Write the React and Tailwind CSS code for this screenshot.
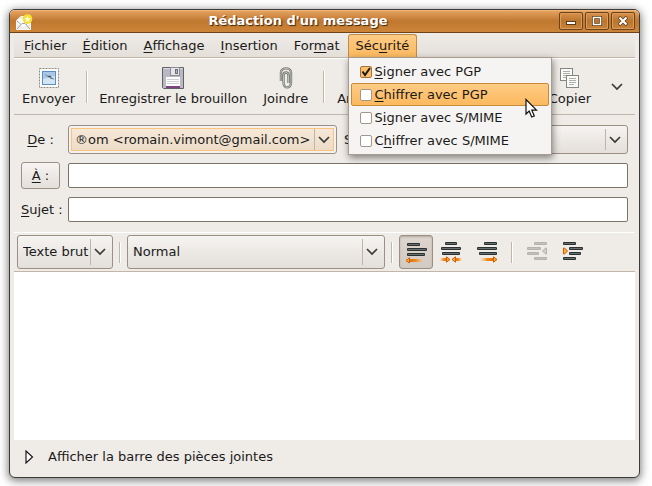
import React from "react";

const U = ({ children }) => (
  <span className="underline decoration-1 underline-offset-2">{children}</span>
);

function Chevron({ className = "" }) {
  return (
    <svg width="12" height="8" viewBox="0 0 12 8" className={className} fill="none" stroke="#3a3a36" strokeWidth="1.7">
      <path d="M1 1 L6 6 L11 1" />
    </svg>
  );
}

function VSep({ className = "" }) {
  return <div className={`w-[2px] shrink-0 border-l border-[#c2b6aa] bg-white ${className}`} />;
}

function Combo({ label, id, value, className = "", focused = false, plain = false }) {
  return (
    <div
      className={`relative flex rounded-[3px] border border-[#9b9084] ${
        focused ? "bg-[#f5f2ee] p-[2px]" : "bg-linear-to-b from-[#f6f4f2] via-[#ece9e5] to-[#e4dfd9] p-[3px]"
      } ${className}`}
    >
      <div
        className={`flex min-w-0 flex-1 ${
          focused ? "border border-[#fac47e] bg-linear-to-b from-[#f6e8d8] to-[#ecdcc8]" : ""
        }`}
      >
        <select
          id={id}
          aria-label={label}
          className={`min-w-0 flex-1 appearance-none bg-transparent outline-none ${plain ? "pl-[2px]" : "pl-[3px]"}`}
          defaultValue={value}
        >
          <option value={value}>{value}</option>
        </select>
        <div className="pointer-events-none flex w-[19px] shrink-0 items-center justify-center border-l border-[#c0b4a8]">
          <Chevron />
        </div>
      </div>
    </div>
  );
}

function ToolButton({ icon, label }) {
  return (
    <button type="button" className="flex shrink-0 flex-col items-center px-2">
      <span className="flex h-[24px] items-center justify-center">{icon}</span>
      <span className="leading-[18px]">{label}</span>
    </button>
  );
}

function StampIcon() {
  return (
    <svg width="20" height="20" viewBox="0 0 20 20">
      <rect x="0.5" y="0.5" width="19" height="19" fill="#fbfbfa" stroke="#8b8c88" strokeDasharray="2 1" />
      <rect x="3.5" y="3.5" width="13" height="13" fill="#a9c8e6" stroke="#5b8fc4" />
      <path d="M4 11 L16 8 V16 H4Z" fill="#d3e4f2" />
      <path d="M5 6 L9 8 L11 7.5 L13 9.5 L10 9.6 Z" fill="#45525e" />
      <path d="M11 10 L15 11" stroke="#5f7488" />
    </svg>
  );
}

function DiskIcon() {
  return (
    <svg width="22" height="22" viewBox="0 0 22 22">
      <path d="M0.5 0.5 H21.5 V21.5 H1.5 L0.5 20.5Z" fill="#b9b9c4" stroke="#60606b" />
      <path d="M1.5 1.5 H20.5" stroke="#dcdce4" />
      <rect x="8.5" y="0.5" width="9" height="8" fill="#e6e6ea" stroke="#8b8b96" />
      <rect x="13.5" y="2.5" width="2" height="4" fill="#b4b4bf" stroke="#6e6e78" />
      <rect x="4" y="10" width="14" height="9" fill="#fdfdfe" />
      <path d="M5 12.5 H17 M5 14.5 H17 M5 16.5 H17" stroke="#cfcfd8" />
      <rect x="4" y="19" width="14" height="2" fill="#7b4480" />
    </svg>
  );
}

function ClipIcon() {
  return (
    <svg width="14" height="22" viewBox="0 0 14 22" fill="none">
      <path d="M2 14 V5.5 C2 0 12 0 12 5.5 V15.5 C12 22 4.5 22 4.5 15.5 V8.5 C4.5 4.5 9.5 4.5 9.5 8.5 V16" stroke="#757972" strokeWidth="2.4" />
      <path d="M2 14 V5.5 C2 0 12 0 12 5.5 V15.5 C12 22 4.5 22 4.5 15.5 V8.5 C4.5 4.5 9.5 4.5 9.5 8.5 V16" stroke="#c6cac2" strokeWidth="0.9" />
    </svg>
  );
}

function CopyIcon() {
  return (
    <svg width="20" height="20" viewBox="0 0 20 20">
      <rect x="0.5" y="0.5" width="12" height="12" fill="#fafaf9" stroke="#858782" />
      <path d="M3 3.5 H10 M3 5.5 H10 M3 7.5 H10 M3 9.5 H8" stroke="#aeb0ab" />
      <rect x="6.5" y="7.5" width="12" height="12" fill="#fafaf9" stroke="#858782" />
      <path d="M9 10.5 H16 M9 12.5 H16 M9 14.5 H16 M9 16.5 H14" stroke="#aeb0ab" />
    </svg>
  );
}

function MailIcon() {
  return (
    <svg width="17" height="17" viewBox="0 0 17 17">
      <path d="M0.5 6.5 L5 2.5 H11 L14.5 6.5 V15.5 H0.5Z" fill="#eeeeec" stroke="#f7f7f5" />
      <path d="M2 5 H13 V10 L7.5 13 L2 10Z" fill="#fff" />
      <path d="M1 15 L6 9.5 H9 L14 15 M1 7 L5 10.5 M14 7 L10 10.5" stroke="#a5a6a0" fill="none" />
      <circle cx="11.5" cy="5" r="4.8" fill="#f8e52e" />
      <path d="M11.5 1 L12.8 3.8 L15.7 4.1 L13.5 6.1 L14.2 9 L11.5 7.5 L8.8 9 L9.5 6.1 L7.3 4.1 L10.2 3.8Z" fill="#fffbd0" stroke="#e8c500" strokeWidth="0.5" />
    </svg>
  );
}

/* Each bar is [x, y, width] with a fixed height of 3. */
function Bars({ bars, dim }) {
  return bars.map(([x, y, w]) => (
    <g key={`${x}-${y}`}>
      <rect x={x} y={y} width={w} height="3" rx="1" fill={dim ? "#b6b3ae" : "#2a3032"} />
      <rect x={x + 1} y={y + 1} width={w - 2} height="1" fill={dim ? "#c4c1bc" : "#66706f"} />
    </g>
  ));
}

const ArrowL = ({ x, y, tail }) => (
  <g>
    <rect x={x + 3} y={y - 1} width={tail} height="3" fill="url(#fadeRight)" />
    <path d={`M${x} ${y + 0.5} l3.5 -2.7 v5.4z`} fill="#fcae3a" stroke="#ce5c00" />
  </g>
);
const ArrowR = ({ x, y, tail }) => (
  <g>
    <rect x={x - 3 - tail} y={y - 1} width={tail} height="3" fill="url(#fadeLeft)" />
    <path d={`M${x} ${y + 0.5} l-3.5 -2.7 v5.4z`} fill="#fcae3a" stroke="#ce5c00" />
  </g>
);

function AlignLeftIcon() {
  return (
    <svg width="22" height="22" viewBox="0 0 22 22">
      <defs>
        <linearGradient id="fadeRight">
          <stop offset="0" stopColor="#e07010" />
          <stop offset="0.5" stopColor="#f08a1c" />
          <stop offset="1" stopColor="#f9b868" stopOpacity="0.1" />
        </linearGradient>
        <linearGradient id="fadeLeft">
          <stop offset="0" stopColor="#f9b868" stopOpacity="0.1" />
          <stop offset="0.5" stopColor="#f08a1c" />
          <stop offset="1" stopColor="#e07010" />
        </linearGradient>
      </defs>
      <Bars bars={[[2, 2, 13], [2, 7, 20], [2, 12, 18]]} />
      <ArrowL x={1} y={19} tail={14} />
    </svg>
  );
}

function AlignCenterIcon() {
  return (
    <svg width="22" height="22" viewBox="0 0 22 22">
      <Bars bars={[[5, 1, 12], [1, 6, 20], [2, 11, 18]]} />
      <ArrowR x={10} y={18} tail={7} />
      <ArrowL x={12} y={18} tail={7} />
    </svg>
  );
}

function AlignRightIcon() {
  return (
    <svg width="22" height="22" viewBox="0 0 22 22">
      <Bars bars={[[8, 1, 13], [1, 6, 20], [3, 11, 18]]} />
      <ArrowR x={21} y={18} tail={14} />
    </svg>
  );
}

function OutdentIcon() {
  return (
    <svg width="22" height="22" viewBox="0 0 22 22">
      <Bars dim bars={[[8, 1, 13], [1, 6, 14], [1, 11, 12], [8, 16, 13]]} />
      <path d="M20.5 7 v6 h-1 l-3 -3 l3 -3z" fill="#d0cdc8" stroke="#b6b3ae" />
    </svg>
  );
}

function IndentIcon() {
  return (
    <svg width="22" height="22" viewBox="0 0 22 22">
      <Bars bars={[[1, 1, 13], [7, 6, 14], [7, 11, 12], [1, 16, 13]]} />
      <path d="M1.5 7 v6 h1 l3 -3 l-3 -3z" fill="#fcae3a" stroke="#ce5c00" />
    </svg>
  );
}

function FormatButton({ label, icon, active, disabled }) {
  return (
    <button
      type="button"
      aria-label={label}
      aria-pressed={active}
      disabled={disabled}
      className={`flex h-[34px] items-center justify-center rounded-[3px] border ${
        active
          ? "w-[34px] border-[#9b8f84] bg-linear-to-b from-[#ddd5ce] to-[#d3cac2] shadow-[inset_0_1px_2px_#b5aaa0]"
          : "w-[36px] border-transparent"
      }`}
    >
      {icon}
    </button>
  );
}

function SecurityItem({ children, checked = false, highlighted = false }) {
  return (
    <label
      className={`relative flex h-[23px] items-center rounded-[2px] border pl-[8px] ${
        highlighted ? "border-[#c68a3a] bg-linear-to-b from-[#ffcb84] to-[#fbb95e]" : "border-transparent"
      }`}
    >
      <span className="relative mr-[3px] size-[12px]">
        <input
          type="checkbox"
          defaultChecked={checked}
          className="block size-[12px] appearance-none rounded-[2px] border border-[#a3968a] bg-white checked:border-[#a8733a] checked:bg-[#fdbf6c]"
        />
        {checked && (
          <svg width="12" height="12" viewBox="0 0 12 12" className="pointer-events-none absolute inset-0">
            <path d="M2.5 5.5 L5 9 L10 2" fill="none" stroke="#1a1a1a" strokeWidth="2" />
          </svg>
        )}
      </span>
      <span>{children}</span>
      {highlighted && (
        <svg width="13" height="21" viewBox="0 0 13 21" className="pointer-events-none absolute top-[14px] right-[10px] z-20">
          <path d="M1 1.5 V16 L4.2 13 L6.7 19 L9.3 18 L6.8 12.2 H11.5 Z" fill="#fff" stroke="#111" strokeWidth="1.2" />
        </svg>
      )}
    </label>
  );
}

function WindowButton({ label, children }) {
  return (
    <button
      type="button"
      aria-label={label}
      className="flex h-[18px] w-[24px] items-center justify-center rounded-[2px] border border-[#6b431a] bg-linear-to-b from-[#d9924b] via-[#b9752f] to-[#c98439] shadow-[inset_0_0_0_1px_#dc9c5c]"
    >
      <svg width="10" height="10" viewBox="0 0 10 10">{children}</svg>
    </button>
  );
}

function MenuItem({ children }) {
  return <button type="button" className="h-[23px] px-2">{children}</button>;
}

export default function App() {
  return (
    <div className="flex min-h-screen bg-white pt-[9px] pr-[12px] pb-[8px] pl-[9px] font-['DejaVu_Sans',sans-serif] text-[13px] leading-[16px] text-[#1a1a1a]">
      <div className="flex min-w-0 flex-1 flex-col rounded-[6px] border border-[#3c3b37] bg-[#efebe7] shadow-[0_2px_9px_1px_rgba(0,0,0,0.5)]">
        <header className="flex h-[23px] shrink-0 items-center rounded-t-[5px] border-b border-[#6e4318] bg-linear-to-b from-[#e8a663] via-[#c07830] to-[#cc8538] pr-[4px] pl-[6px] shadow-[inset_0_1px_0_#f0b67c]">
          <div className="pt-[2px]">
            <MailIcon />
          </div>
          <h1 className="flex-1 pl-1 text-center font-bold text-white [text-shadow:1px_1px_1px_#3d2408]">
            Rédaction d'un message
          </h1>
          <div className="flex gap-[2px]">
            <WindowButton label="Réduire">
              <rect x="0.5" y="5.5" width="9" height="3" fill="#fff" stroke="#5c3a17" />
            </WindowButton>
            <WindowButton label="Agrandir">
              <rect x="1.5" y="1.5" width="7" height="7" fill="none" stroke="#5c3a17" strokeWidth="3" />
              <rect x="1.5" y="1.5" width="7" height="7" fill="none" stroke="#fff" strokeWidth="1.5" />
            </WindowButton>
            <WindowButton label="Fermer">
              <path d="M1 1 L9 9 M9 1 L1 9" stroke="#5c3a17" strokeWidth="3.6" />
              <path d="M1.5 1.5 L8.5 8.5 M8.5 1.5 L1.5 8.5" stroke="#fff" strokeWidth="2.2" />
            </WindowButton>
          </div>
        </header>

        <div className="flex flex-1 flex-col px-[4px]">
          <nav className="flex h-[25px] shrink-0 items-end border-b border-[#c2b6aa] bg-linear-to-b from-[#efebe7] to-[#e4dfd9] pl-[2px]">
            <MenuItem><U>F</U>ichier</MenuItem>
            <MenuItem><U>É</U>dition</MenuItem>
            <MenuItem><U>A</U>ffichage</MenuItem>
            <MenuItem><U>I</U>nsertion</MenuItem>
            <MenuItem>For<U>m</U>at</MenuItem>
            <div className="relative">
              <button
                type="button"
                aria-expanded="true"
                className="block h-[23px] rounded-t-[3px] border border-b-0 border-[#c08a48] bg-linear-to-b from-[#ffcb84] to-[#fbb95e] px-[7px]"
              >
                Séc<U>u</U>rité
              </button>
              <div className="absolute top-[23px] left-0 z-10 w-[204px] border border-[#a89c90] bg-[#f6f4f2] p-[2px] shadow-[1px_3px_7px_rgba(0,0,0,0.45)]">
                <SecurityItem checked><U>S</U>igner avec PGP</SecurityItem>
                <SecurityItem highlighted><U>C</U>hiffrer avec PGP</SecurityItem>
                <SecurityItem>S<U>i</U>gner avec S/MIME</SecurityItem>
                <SecurityItem>C<U>h</U>iffrer avec S/MIME</SecurityItem>
              </div>
            </div>
          </nav>

          <div className="flex h-[57px] shrink-0 items-center border-y border-t-white border-b-[#c2b6aa]">
            <ToolButton icon={<StampIcon />} label="Envoyer" />
            <VSep className="mx-[3px] h-[32px]" />
            <ToolButton icon={<DiskIcon />} label="Enregistrer le brouillon" />
            <ToolButton icon={<ClipIcon />} label="Joindre" />
            <VSep className="mr-[4px] ml-[7px] h-[32px]" />
            <ToolButton icon={null} label="Annuler" />
            <div className="flex-1" />
            <ToolButton icon={<CopyIcon />} label="Copier" />
            <button type="button" aria-label="Plus d'outils" className="flex w-[36px] items-center justify-center">
              <Chevron />
            </button>
          </div>

          <form className="grid grid-cols-[39px_1fr] items-center gap-x-2 gap-y-[8px] pt-[10px] pr-[7px] pb-[10px] pl-[7px]">
            <label htmlFor="from" className="text-center"><U>D</U>e :</label>
            <div className="flex h-[29px] min-w-0 items-center">
              <Combo id="from" label="De" value="®om <romain.vimont@gmail.com>" focused className="h-[29px] w-[269px]" />
              <label htmlFor="signature" className="px-[7px]">Signature :</label>
              <Combo id="signature" label="Signature" value="" className="h-[29px] min-w-0 flex-1" />
            </div>
            <button type="button" className="h-[27px] rounded-[3px] border border-[#9b9084] bg-linear-to-b from-[#f6f4f2] to-[#e4dfd9]">
              <U>À</U> :
            </button>
            <input aria-label="À" className="h-[25px] w-full rounded-[2px] border border-[#7d7368] bg-white px-1 outline-none" />
            <label htmlFor="subject" className="text-center whitespace-nowrap"><U>S</U>ujet :</label>
            <input id="subject" className="h-[25px] w-full rounded-[2px] border border-[#7d7368] bg-white px-1 outline-none" />
          </form>

          <div className="flex h-[40px] shrink-0 items-center border-y border-t-white border-b-[#c2b6aa] px-[3px]">
            <Combo label="Format du texte" value="Texte brut" plain className="h-[34px] w-[96px]" />
            <VSep className="mx-[6px] h-[21px]" />
            <Combo label="Style de paragraphe" value="Normal" plain className="h-[34px] w-[258px]" />
            <VSep className="mx-[6px] h-[21px]" />
            <FormatButton label="Aligner à gauche" icon={<AlignLeftIcon />} active />
            <FormatButton label="Centrer" icon={<AlignCenterIcon />} />
            <FormatButton label="Aligner à droite" icon={<AlignRightIcon />} />
            <VSep className="mx-[6px] h-[21px]" />
            <FormatButton label="Diminuer le retrait" icon={<OutdentIcon />} disabled />
            <FormatButton label="Augmenter le retrait" icon={<IndentIcon />} />
          </div>

          <textarea aria-label="Message" className="block w-full flex-1 resize-none bg-white p-1 outline-none" />

          <footer className="flex h-[37px] shrink-0 items-center pb-[4px] pl-[11px]">
            <button type="button" className="flex items-center gap-[14px]">
              <svg width="9" height="14" viewBox="0 0 9 14">
                <path d="M1 1 L7.5 7 L1 13Z" fill="#fff" stroke="#1a1a1a" strokeWidth="1.2" />
              </svg>
              <span>Afficher la barre des pièces <U>j</U>ointes</span>
            </button>
          </footer>
        </div>
      </div>
    </div>
  );
}
